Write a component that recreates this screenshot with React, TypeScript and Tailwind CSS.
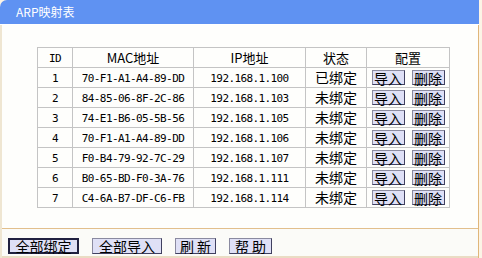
import React from "react";

const rows = [
  ["1", "70-F1-A1-A4-89-DD", "192.168.1.100", "已绑定"],
  ["2", "84-85-06-8F-2C-86", "192.168.1.103", "未绑定"],
  ["3", "74-E1-B6-05-5B-56", "192.168.1.105", "未绑定"],
  ["4", "70-F1-A1-A4-89-DD", "192.168.1.106", "未绑定"],
  ["5", "F0-B4-79-92-7C-29", "192.168.1.107", "未绑定"],
  ["6", "B0-65-BD-F0-3A-76", "192.168.1.111", "未绑定"],
  ["7", "C4-6A-B7-DF-C6-FB", "192.168.1.114", "未绑定"],
];

const monoCls = "font-['DejaVu_Sans_Mono',monospace] text-[11px] tracking-[-0.6px]";
const btnBase =
  "flex items-center justify-center bg-[#dfe0f6] text-[14px] leading-none text-black";
const btnBorder = "border border-[#8a8aa0] border-r-[#404060] border-b-[#404060]";

function SmallBtn({ label }: { label: string }) {
  return <div className={`${btnBase} ${btnBorder} h-[15px] w-[33px]`}>{label}</div>;
}

function BigBtn({ label, w, dark }: { label: string; w: string; dark?: boolean }) {
  return (
    <div className={`${btnBase} h-[16px] ${w} ${dark ? "border-2 border-[#202040]" : btnBorder}`}>{label}</div>
  );
}

export default function App() {
  const cell = "border border-[#c4c4c4] text-center h-[19px] p-0 leading-[17px] overflow-hidden";
  return (
    <div className="w-[482px] h-[258px] bg-[#fcf4e6] overflow-hidden flex flex-col font-['Noto_Sans_CJK_SC','Liberation_Sans',sans-serif]">
      <div className="h-[24px] shrink-0 bg-[#5f92f2] rounded-tl-[7px] text-white text-[12px] pl-[16px] flex items-center mr-[3px]">
        ARP映射表
      </div>
      <div className="h-[1px] shrink-0 bg-white mr-[3px]" />
      <div className="h-[233px] flex flex-col border-l-2 border-[#efe6d2] mr-[3px] border-r border-r-[#e0b67a] bg-[#fefefc]">
        <div className="h-[203px] shrink-0 pt-[22px] pl-[35px]">
          <table className="border-collapse table-fixed w-[412px] text-[13px] text-black">
            <thead>
              <tr>
                <td className={`${cell} w-[35px]`}>
                  <span className={monoCls}>ID</span>
                </td>
                <td className={`${cell} w-[121px]`}>MAC地址</td>
                <td className={`${cell} w-[112px]`}>IP地址</td>
                <td className={`${cell} w-[61px]`}>状态</td>
                <td className={`${cell} w-[83px]`}>配置</td>
              </tr>
            </thead>
            <tbody>
              {rows.map((r) => (
                <tr key={r[0]}>
                  <td className={cell}>
                    <span className={monoCls}>{r[0]}</span>
                  </td>
                  <td className={cell}>
                    <span className={monoCls}>{r[1]}</span>
                  </td>
                  <td className={cell}>
                    <span className={monoCls}>{r[2]}</span>
                  </td>
                  <td className={`${cell} text-[14px]`}>{r[3]}</td>
                  <td className={cell}>
                    <div className="flex items-center justify-center gap-[7px]">
                      <SmallBtn label="导入" />
                      <SmallBtn label="删除" />
                    </div>
                  </td>
                </tr>
              ))}
            </tbody>
          </table>
        </div>
        <div className="h-[28px] shrink-0 border-t border-[#e2bf8c] bg-[#fbfbf8] flex items-center gap-[13px] pl-[6px] pt-[6px]">
          <BigBtn label="全部绑定" w="w-[71px]" dark />
          <BigBtn label="全部导入" w="w-[70px]" />
          <BigBtn label="刷 新" w="w-[41px]" />
          <BigBtn label="帮 助" w="w-[43px]" />
        </div>
        <div className="h-[2px] shrink-0 bg-[#eadcc4]" />
      </div>
    </div>
  );
}
